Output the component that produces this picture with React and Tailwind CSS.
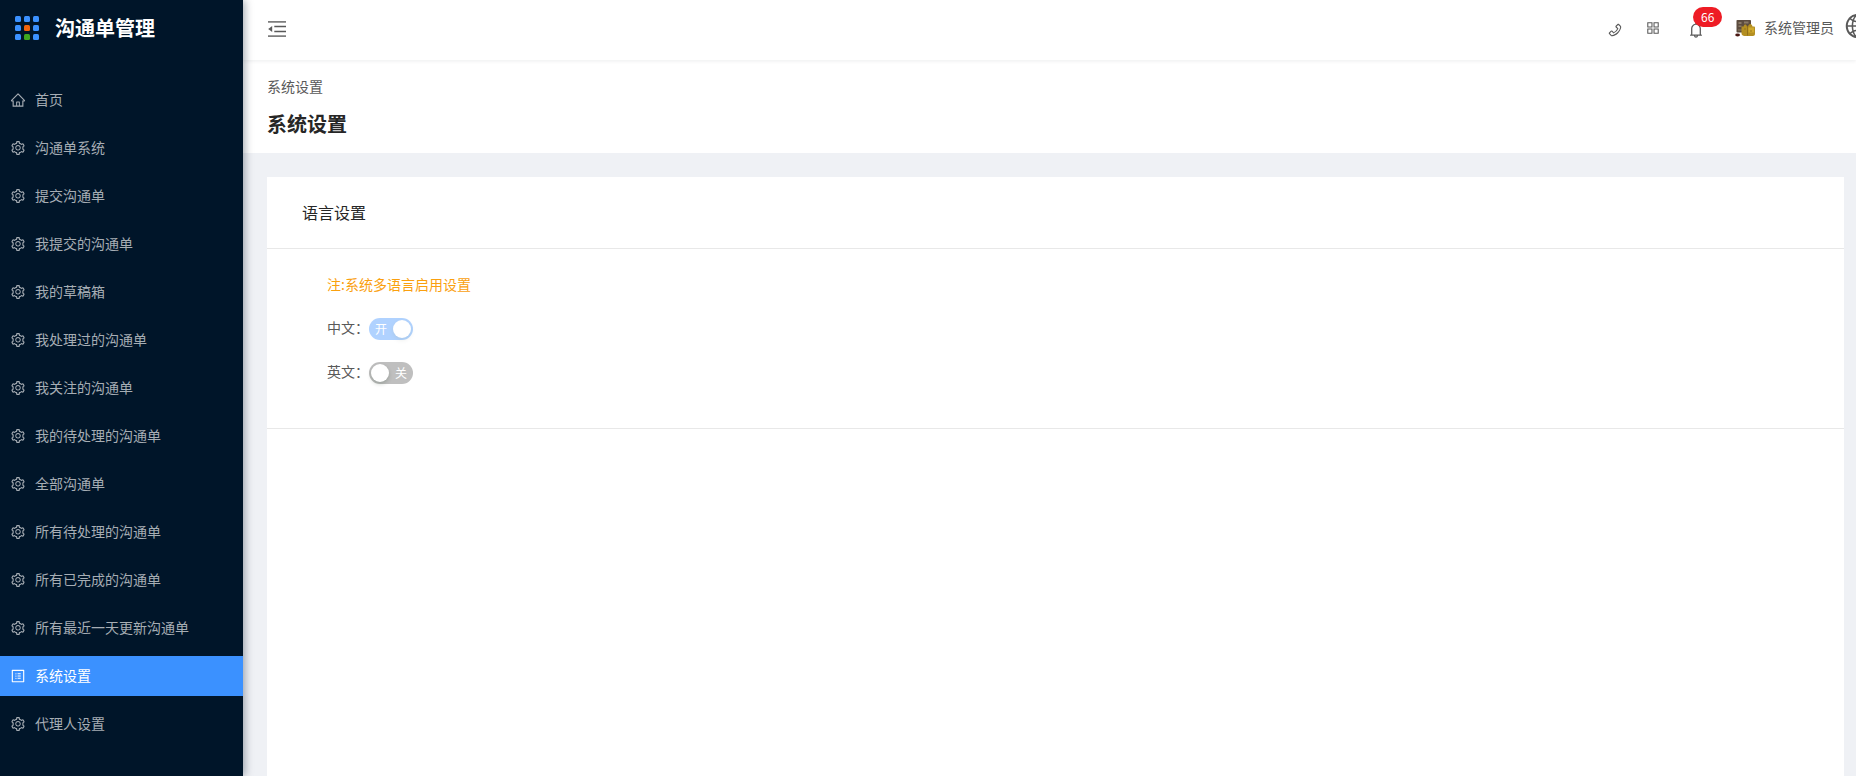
import { useState } from "react";
import {
  AiOutlineAppstore,
  AiOutlineBell,
  AiOutlineGlobal,
  AiOutlineHome,
  AiOutlinePhone,
  AiOutlineProfile,
  AiOutlineSetting,
} from "react-icons/ai";

const MENU = [
  { label: "首页", icon: AiOutlineHome },
  { label: "沟通单系统" },
  { label: "提交沟通单" },
  { label: "我提交的沟通单" },
  { label: "我的草稿箱" },
  { label: "我处理过的沟通单" },
  { label: "我关注的沟通单" },
  { label: "我的待处理的沟通单" },
  { label: "全部沟通单" },
  { label: "所有待处理的沟通单" },
  { label: "所有已完成的沟通单" },
  { label: "所有最近一天更新沟通单" },
  { label: "系统设置", icon: AiOutlineProfile, active: true },
  { label: "代理人设置" },
];

function Logo() {
  const colors = [
    "#3b91ff", "#3b91ff", "#3b91ff",
    "#3b91ff", "#f2640c", "#3b91ff",
    "#3b91ff", "#3fa71f", "#3b91ff",
  ];
  return (
    <svg className="size-6 shrink-0" viewBox="0 0 24 24" aria-hidden="true">
      {colors.map((fill, i) => (
        <rect key={i} x={(i % 3) * 9} y={Math.floor(i / 3) * 9} width="6" height="6" rx="1.5" fill={fill} />
      ))}
    </svg>
  );
}

function MenuFold() {
  return (
    <svg className="h-4 w-[18px]" viewBox="0 0 18 16" aria-hidden="true">
      <path d="M0 0h18v1.8H0zM0 14.2h18V16H0z" fill="#7d7d7d" />
      <path d="M6.3 4.7H18v1.6H6.3zM6.3 9.7H18v1.6H6.3z" fill="#595959" />
      <path d="M4.2 5v6L.2 8z" fill="#595959" />
    </svg>
  );
}

function Avatar() {
  return (
    <svg className="size-5 shrink-0" viewBox="0 0 20 20" aria-hidden="true">
      <rect x="1.5" y="2" width="14.5" height="12.5" rx="0.8" fill="#5c4c3f" />
      <path d="M3.5 4h3v2h-3zM3.5 7.5h3v1.5h-3zM9 3.5h4.5v2H9z" fill="#8a7a68" />
      <path d="M3 11h4v2H3z" fill="#75644f" />
      <path d="M6.5 8.5h2.2c.3-2.6 2.8-2.6 3.2 0h1.2c.4-3.400 4-3.400 4.400 0h1.300c.8 0 1.200.5 1.200 1.200V16c0 1.200-.8 2-2 2H9.500c-1.500 0-3-.9-3-2.500z" fill="#b48f22" />
      <path d="M13.5 9.5H19v5h-5.500z" fill="#d0a92b" />
      <path d="M12.5 8v9.5M9 11h2M16 12v2" stroke="#8a6a17" strokeWidth="0.8" />
      <ellipse cx="2.6" cy="17" rx="2.400" ry="1.400" fill="#4a1712" />
    </svg>
  );
}

function Switch({ id, checked, onChange, muted }) {
  return (
    <span className={`relative inline-flex h-[22px] w-11 ${muted ? "opacity-40" : ""}`}>
      <input
        id={id}
        type="checkbox"
        role="switch"
        checked={checked}
        onChange={onChange}
        className="h-full w-full cursor-pointer appearance-none rounded-full bg-[#bfbfbf] checked:bg-[#3b91ff]"
      />
      <span
        className={`pointer-events-none absolute inset-y-0 flex items-center text-xs text-white ${checked ? "left-1.5" : "right-1.5"}`}
      >
        {checked ? "开" : "关"}
      </span>
      <span
        className={`pointer-events-none absolute top-0.5 size-[18px] rounded-full bg-white shadow-[0_2px_4px_rgba(0,35,11,0.2)] ${checked ? "right-0.5" : "left-0.5"}`}
      />
    </span>
  );
}

export default function App() {
  const [zh, setZh] = useState(true);
  const [en, setEn] = useState(false);

  return (
    <div className="flex min-h-screen overflow-hidden bg-[#eff1f5] font-['Noto_Sans_CJK_SC',sans-serif] text-sm text-[#595959]">
      <aside className="relative z-10 flex w-[243px] shrink-0 flex-col bg-[#001529] shadow-[2px_0_8px_rgba(0,21,41,0.35)]">
        <div className="flex h-14 items-center gap-4 pl-[15px]">
          <Logo />
          <h1 className="text-xl font-bold text-white">沟通单管理</h1>
        </div>
        <nav className="flex flex-col gap-2 pt-6">
          {MENU.map(({ label, icon: Icon = AiOutlineSetting, active }) => (
            <a
              key={label}
              href="#"
              aria-current={active ? "page" : undefined}
              className={`flex h-10 items-center gap-[9px] pl-2.5 ${active ? "bg-[#3b91ff] text-white" : "text-[#a6adb4]"}`}
            >
              <Icon className="size-4 shrink-0" />
              <span className="pb-0.5">{label}</span>
            </a>
          ))}
        </nav>
      </aside>

      <div className="flex min-w-0 flex-1 flex-col">
        <header className="relative flex h-[60px] shrink-0 items-start justify-between bg-white pl-6 shadow-[0_1px_4px_rgba(0,21,41,0.08)]">
          <button type="button" aria-label="收起菜单" className="flex h-[58px] items-center pl-px">
            <MenuFold />
          </button>
          <div className="-mr-4 flex h-14 items-center">
            <button type="button" aria-label="电话" className="pt-1">
              <AiOutlinePhone className="size-4" />
            </button>
            <button type="button" aria-label="应用" className="ml-[22px]">
              <AiOutlineAppstore className="size-4" />
            </button>
            <button type="button" aria-label="通知" className="relative ml-[26px] pt-1">
              <AiOutlineBell className="size-[18px]" />
              <span className="absolute -top-2.5 left-1.5 flex h-5 items-center rounded-full bg-[#ee1c25] px-2 text-xs text-white">
                66
              </span>
            </button>
            <button type="button" className="ml-[30px] flex items-center gap-[9px] whitespace-nowrap">
              <Avatar />
              <span className="pb-0.5">系统管理员</span>
            </button>
            <button type="button" aria-label="语言" className="ml-2.5 pb-1">
              <AiOutlineGlobal className="size-7" />
            </button>
          </div>
        </header>

        <div className="bg-white px-6 pt-[15px] pb-[13px]">
          <div className="leading-[22px]">系统设置</div>
          <h2 className="mt-[11px] text-xl leading-8 font-bold text-[#262626]">系统设置</h2>
        </div>

        <main className="flex flex-1 flex-col pt-6 pr-3 pl-6">
          <section className="flex-1 bg-white">
            <h3 className="border-b border-[#e8e8e8] px-[35px] pt-[23px] pb-6 text-base text-[#262626]">语言设置</h3>
            <div className="border-b border-[#e8e8e8] px-[60px] pt-6 pb-11">
              <p className="leading-[22px] text-[#faa00f]">注:系统多语言启用设置</p>
              <div className="mt-[23px] flex flex-col gap-[22px]">
                <div className="flex h-[22px] items-center">
                  <label htmlFor="lang-zh" className="pb-1 leading-[22px]">中文：</label>
                  <Switch id="lang-zh" checked={zh} onChange={() => setZh(!zh)} muted />
                </div>
                <div className="flex h-[22px] items-center">
                  <label htmlFor="lang-en" className="pb-1 leading-[22px]">英文：</label>
                  <Switch id="lang-en" checked={en} onChange={() => setEn(!en)} />
                </div>
              </div>
            </div>
          </section>
        </main>
      </div>
    </div>
  );
}
